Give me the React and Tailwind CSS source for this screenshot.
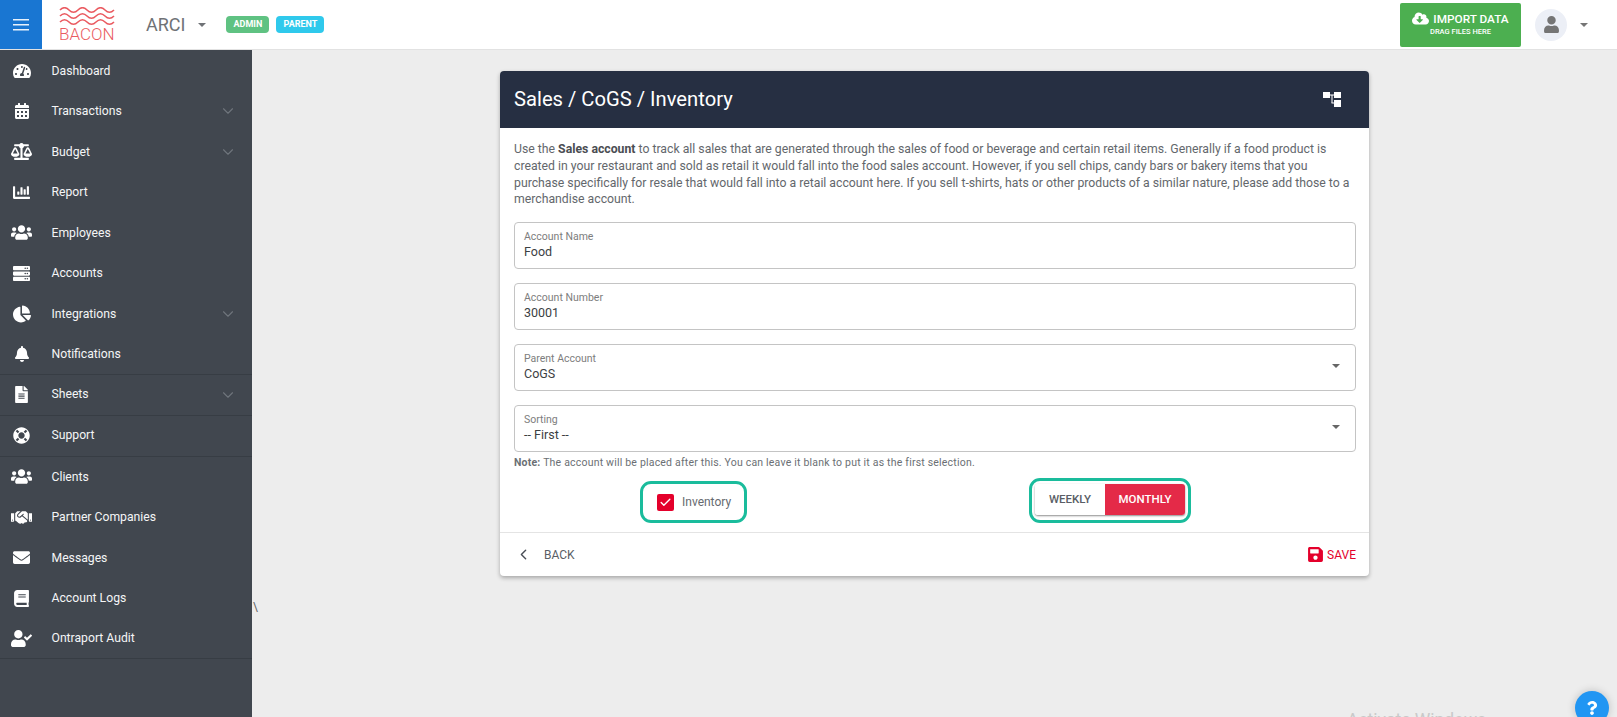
import { Check, ChevronDown, ChevronLeft } from 'lucide-react';
import {
    FaTachometerAlt, FaCalendarAlt, FaBalanceScale, FaChartBar, FaUsers, FaServer, FaChartPie, FaBell,
    FaFileAlt, FaLifeRing, FaHandshake, FaEnvelope, FaBook, FaUserCheck, FaCloudDownloadAlt, FaUser,
    FaSave, FaQuestion,
} from 'react-icons/fa';

// wide icons need a bigger box than tall ones, so each row keeps its own size class
const navItems = [
    { label: 'Dashboard', icon: FaTachometerAlt, size: 'text-[18px]' },
    { label: 'Transactions', icon: FaCalendarAlt, size: 'text-[16px]', sub: true },
    { label: 'Budget', icon: FaBalanceScale, size: 'text-[21px]', sub: true },
    { label: 'Report', icon: FaChartBar, size: 'text-[17px]' },
    { label: 'Employees', icon: FaUsers, size: 'text-[21px]' },
    { label: 'Accounts', icon: FaServer, size: 'text-[17px]' },
    { label: 'Integrations', icon: FaChartPie, size: 'text-[18px]', sub: true },
    { label: 'Notifications', icon: FaBell, size: 'text-[16px]', line: true },
    { label: 'Sheets', icon: FaFileAlt, size: 'text-[17px]', sub: true, line: true, tall: true },
    { label: 'Support', icon: FaLifeRing, size: 'text-[17px]', line: true, tall: true },
    { label: 'Clients', icon: FaUsers, size: 'text-[21px]' },
    { label: 'Partner Companies', icon: FaHandshake, size: 'text-[21px]' },
    { label: 'Messages', icon: FaEnvelope, size: 'text-[17px]' },
    { label: 'Account Logs', icon: FaBook, size: 'text-[17px]' },
    { label: 'Ontraport Audit', icon: FaUserCheck, size: 'text-[21px]', line: true },
];

const Caret = ({ className }) => (
    <span className={`inline-block w-0 h-0 border-x-[4px] border-x-transparent border-t-[4px] ${className}`} />
);

// outlined box with a small label on top of the value
const Field = ({ label, value, select }) => (
    <div className="relative h-[47px] border border-[#c4c4c4] rounded-[4px] pl-[9px] pt-[7px] mb-[14px]">
        <div className="text-[10.5px] leading-[13px] text-[#7d7d7d]">{label}</div>
        <div className="text-[12.5px] leading-[17px] text-[#3c4043]">{value}</div>
        {select && <Caret className="absolute right-[15px] top-[19px] border-t-[#666]" />}
    </div>
);

const Logo = () => (
    <div className="w-[56px] ml-[17px]">
        <svg width="56" height="20" viewBox="0 0 56 20" fill="none" stroke="#ea5b61" strokeWidth="1.6" className="block">
            <path d="M1 3 Q5.5 -1.5 10 3 T19 3 T28 3 T37 3 T46 3 T55 3" />
            <path d="M1 9 Q5.5 4.5 10 9 T19 9 T28 9 T37 9 T46 9 T55 9" />
            <path d="M1 15 Q5.5 10.5 10 15 T19 15 T28 15 T37 15 T46 15 T55 15" />
        </svg>
        <div className="text-[17px] leading-[15px] text-[#ea5b61] font-light">BACON</div>
    </div>
);

const MenuLines = () => (
    <svg width="16" height="12" viewBox="0 0 16 12" fill="#e8f1fb" className="block">
        <rect x="0" y="0" width="16" height="1.5" />
        <rect x="0" y="5" width="16" height="1.5" />
        <rect x="0" y="10" width="16" height="1.5" />
    </svg>
);

const TreeIcon = () => (
    <svg width="18" height="15" viewBox="0 0 18 15" fill="white" className="block">
        <rect x="0" y="0" width="7" height="6" />
        <rect x="11" y="0" width="7" height="6" />
        <rect x="11" y="8" width="7" height="7" />
        <rect x="7" y="2.5" width="4" height="1" />
        <rect x="8.5" y="3" width="1" height="8" />
        <rect x="8.5" y="10.5" width="3" height="1" />
    </svg>
);

const Header = () => (
    <header className="h-[50px] bg-white border-b border-[#e2e2e2] flex items-center shrink-0">
        <div className="w-[42px] h-full bg-[#1976d2] flex items-center justify-center">
            <MenuLines />
        </div>
        <Logo />
        <span className="ml-[31px] text-[18px] text-[#6f7276]">ARCI</span>
        <Caret className="ml-[13px] border-t-[#6f7276]" />
        <span className="ml-[20px] w-[43px] h-[17px] flex items-center justify-center rounded-[4px] bg-[#5fc282] text-white text-[9px] font-bold">ADMIN</span>
        <span className="ml-[7px] w-[48px] h-[17px] flex items-center justify-center rounded-[4px] bg-[#2fc9ec] text-white text-[9px] font-bold">PARENT</span>
        <div className="ml-auto w-[121px] h-[44px] bg-[#4caf50] rounded-[2px] text-white flex flex-col items-center justify-center pb-[2px]">
            <div className="flex items-center gap-[4px] text-[11.8px] leading-[14px] font-medium">
                <FaCloudDownloadAlt className="text-[17px]" />
                IMPORT DATA
            </div>
            <div className="text-[7.5px] leading-[10px] font-medium">DRAG FILES HERE</div>
        </div>
        <div className="ml-[14px] w-[32px] h-[32px] rounded-full bg-[#eceff6] flex items-center justify-center text-[#757575]">
            <FaUser className="text-[17px]" />
        </div>
        <Caret className="ml-[13px] mr-[29px] border-t-[#757575]" />
    </header>
);

const Sidebar = () => (
    <aside className="w-[252px] shrink-0 bg-[#41474f] pt-[0.5px] text-[#f4f5f6]">
        {navItems.map(({ label, icon: Icon, size, sub, line, tall }) => (
            <div key={label} className={`flex items-center ${tall ? 'h-[41px]' : 'h-[40.5px]'} ${line ? 'border-b border-[#373d44]' : ''}`}>
                <div className="w-[42px] flex justify-center pl-[1px]">
                    <Icon className={`${size} text-white`} />
                </div>
                <span className="ml-[9.5px] text-[12.2px]">{label}</span>
                {sub && <ChevronDown className="ml-auto mr-[15px] w-[18px] h-[18px] text-[#6f757c]" strokeWidth={1.5} />}
            </div>
        ))}
    </aside>
);

const Card = () => (
    <div className="w-[869px] mx-auto mt-[21px] bg-white rounded-[4px] shadow-[0_2px_4px_rgba(0,0,0,0.3)] overflow-hidden">
        <div className="h-[57px] bg-[#262f42] text-white flex items-center justify-between pl-[14px] pr-[28px]">
            <h1 className="text-[20.2px] -mt-[1px]">Sales / CoGS / Inventory</h1>
            <TreeIcon />
        </div>
        <div className="pl-[14px] pr-[13px] pt-[13px]">
            <p className="text-[12.25px] leading-[16.8px] text-[#63676c] mb-[14px]">
                Use the <b className="font-bold text-[#4a4d52]">Sales account</b> to track all sales that are generated through the sales of food or beverage and certain retail items. Generally if a food product is created in your restaurant and sold as retail it would fall into the food sales account. However, if you sell chips, candy bars or bakery items that you purchase specifically for resale that would fall into a retail account here. If you sell t-shirts, hats or other products of a similar nature, please add those to a merchandise account.
            </p>
            <Field label="Account Name" value="Food" />
            <Field label="Account Number" value="30001" />
            <Field label="Parent Account" value="CoGS" select />
            <Field label="Sorting" value="-- First --" select />
            <p className="-mt-[10px] text-[10.5px] leading-[14px] tracking-[0.2px] text-[#6b6f74]">
                <b className="font-bold">Note:</b> The account will be placed after this. You can leave it blank to put it as the first selection.
            </p>
            <div className="flex items-end h-[62px] pb-[9px]">
                <div className="ml-[126px] w-[107px] h-[42px] border-[3px] border-[#1abc9c] rounded-[11px] flex items-center pl-[14px]">
                    <span className="w-[17px] h-[17px] rounded-[2px] bg-[#e4002b] flex items-center justify-center text-white">
                        <Check className="w-[13px] h-[13px]" strokeWidth={2.5} />
                    </span>
                    <span className="ml-[8px] text-[12px] text-[#666a70]">Inventory</span>
                </div>
                <div className="ml-[282px] w-[162px] h-[45px] border-[3px] border-[#1abc9c] rounded-[11px] p-[3px] pb-[5px] flex">
                    <div className="flex-1 flex rounded-[3px] overflow-hidden shadow-[0_1px_2px_rgba(0,0,0,0.45)] text-[11.5px] font-medium">
                        <span className="w-[70px] bg-white text-[#5a5e66] flex items-center justify-center">WEEKLY</span>
                        <span className="flex-1 bg-[#e42a48] text-white flex items-center justify-center">MONTHLY</span>
                    </div>
                </div>
            </div>
        </div>
        <div className="h-[44px] border-t border-[#e4e4e4] flex items-center pl-[15px] pr-[13px] text-[12px]">
            <ChevronLeft className="w-[17px] h-[17px] text-[#4a4f57]" strokeWidth={2} />
            <span className="ml-[12px] text-[#5a5e66]">BACK</span>
            <FaSave className="ml-auto text-[17px] text-[#e4002b]" />
            <span className="ml-[3px] text-[#e4002b]">SAVE</span>
        </div>
    </div>
);

export default function App() {
    return (
        <div className="relative h-[717px] overflow-hidden flex flex-col bg-[#ededed] font-['Roboto',sans-serif]">
            <Header />
            <div className="flex flex-1 min-h-0">
                <Sidebar />
                <main className="relative flex-1">
                    <Card />
                    <span className="absolute left-[1px] top-[548px] text-[12px] text-[#666]">\</span>
                </main>
            </div>
            {/* windows watermark cut by the bottom edge */}
            <span className="absolute left-[1347px] top-[708px] text-[17.5px] leading-[24px] text-[#c9c9c9]">Activate Windows</span>
            <div className="absolute left-[1575px] top-[691px] w-[34px] h-[34px] rounded-full bg-[#2196f3] flex items-center justify-center text-white shadow-[0_0_8px_rgba(0,0,0,0.2)]">
                <FaQuestion className="text-[14px]" />
            </div>
        </div>
    );
}
